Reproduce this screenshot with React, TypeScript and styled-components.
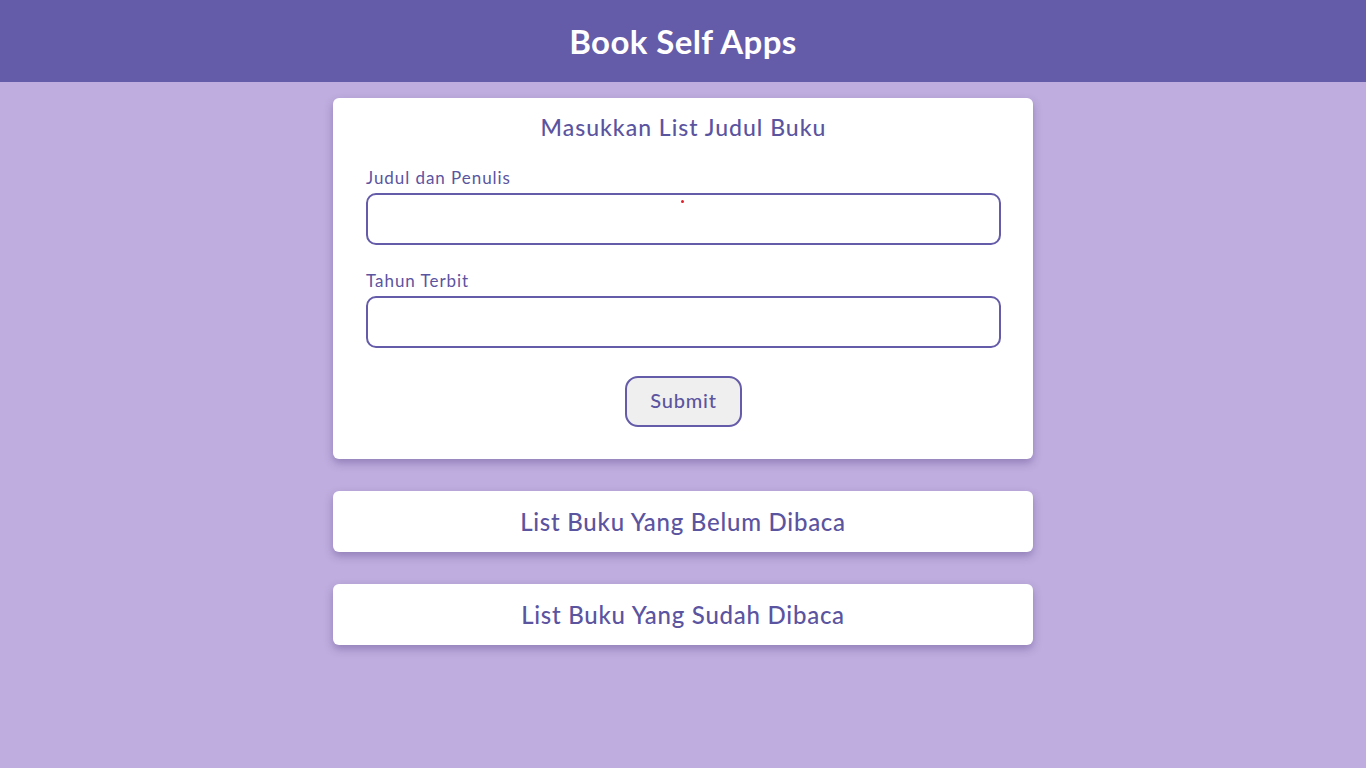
import React from "react";
import styled, { createGlobalStyle } from "styled-components";

const Global = createGlobalStyle`
  html, body { margin: 0; padding: 0; }
  body {
    background: #bfaddf;
    font-family: "Lato", "Open Sans", sans-serif;
    min-height: 768px;
  }
  * { box-sizing: border-box; }
`;

const Header = styled.header`
  height: 82px;
  background: #645ba9;
  display: flex;
  align-items: center;
  justify-content: center;
`;

const AppTitle = styled.h1`
  margin: 0;
  color: #ffffff;
  font-size: 33px;
  font-weight: 700;
  letter-spacing: 0.4px;
`;

const Main = styled.main`
  width: 700px;
  margin: 16px auto 0;
  display: flex;
  flex-direction: column;
  gap: 32px;
`;

const Card = styled.section`
  background: #ffffff;
  border-radius: 6px;
  box-shadow: 0 4px 8px rgba(60, 40, 110, 0.35);
`;

const FormCard = styled(Card)`
  padding: 15px 32px 32px 33px;
  position: relative;
`;

const CardTitle = styled.h2`
  margin: 0;
  text-align: center;
  color: #5b549f;
  font-size: 23px;
  font-weight: 500;
  line-height: 28px;
  letter-spacing: 1px;
`;

const Field = styled.div<{ $top: number }>`
  display: flex;
  flex-direction: column;
  margin-top: ${(p) => p.$top}px;
`;

const Label = styled.label`
  color: #5b549f;
  font-size: 17px;
  line-height: 20px;
  margin-bottom: 5px;
  letter-spacing: 0.95px;
`;

const Input = styled.input`
  height: 52px;
  width: 635px;
  border: 2px solid #645ba9;
  border-radius: 10px;
  background: #fff;
  font-size: 16px;
  padding: 0 12px;
  outline: none;
`;

const ButtonRow = styled.div`
  display: flex;
  justify-content: center;
  margin-top: 28px;
`;

const SubmitButton = styled.button`
  width: 117px;
  height: 51px;
  background: #efefef;
  border: 2px solid #645ba9;
  border-radius: 13px;
  color: #5b549f;
  font-family: "Lato", "Open Sans", sans-serif;
  font-size: 20px;
  font-weight: 500;
  letter-spacing: 0.8px;
  padding: 0 0 3px;
  cursor: pointer;
`;

const ListCard = styled(Card)`
  height: 61px;
  display: flex;
  align-items: center;
  justify-content: center;
`;

const ListTitle = styled.h2`
  margin: 0;
  color: #5b549f;
  font-size: 24px;
  font-weight: 500;
  letter-spacing: 0.75px;
`;

const Dot = styled.span`
  position: absolute;
  left: 348px;
  top: 102px;
  width: 3px;
  height: 3px;
  border-radius: 50%;
  background: #e0202a;
`;

export default function App() {
  return (
    <>
      <Global />
      <Header>
        <AppTitle>Book Self Apps</AppTitle>
      </Header>
      <Main>
        <FormCard>
          <CardTitle>Masukkan List Judul Buku</CardTitle>
          <Field $top={27}>
            <Label htmlFor="judul">Judul dan Penulis</Label>
            <Input id="judul" type="text" />
          </Field>
          <Field $top={26}>
            <Label htmlFor="tahun">Tahun Terbit</Label>
            <Input id="tahun" type="number" />
          </Field>
          <ButtonRow>
            <SubmitButton type="submit">Submit</SubmitButton>
          </ButtonRow>
          <Dot />
        </FormCard>
        <ListCard>
          <ListTitle>List Buku Yang Belum Dibaca</ListTitle>
        </ListCard>
        <ListCard>
          <ListTitle>List Buku Yang Sudah Dibaca</ListTitle>
        </ListCard>
      </Main>
    </>
  );
}
